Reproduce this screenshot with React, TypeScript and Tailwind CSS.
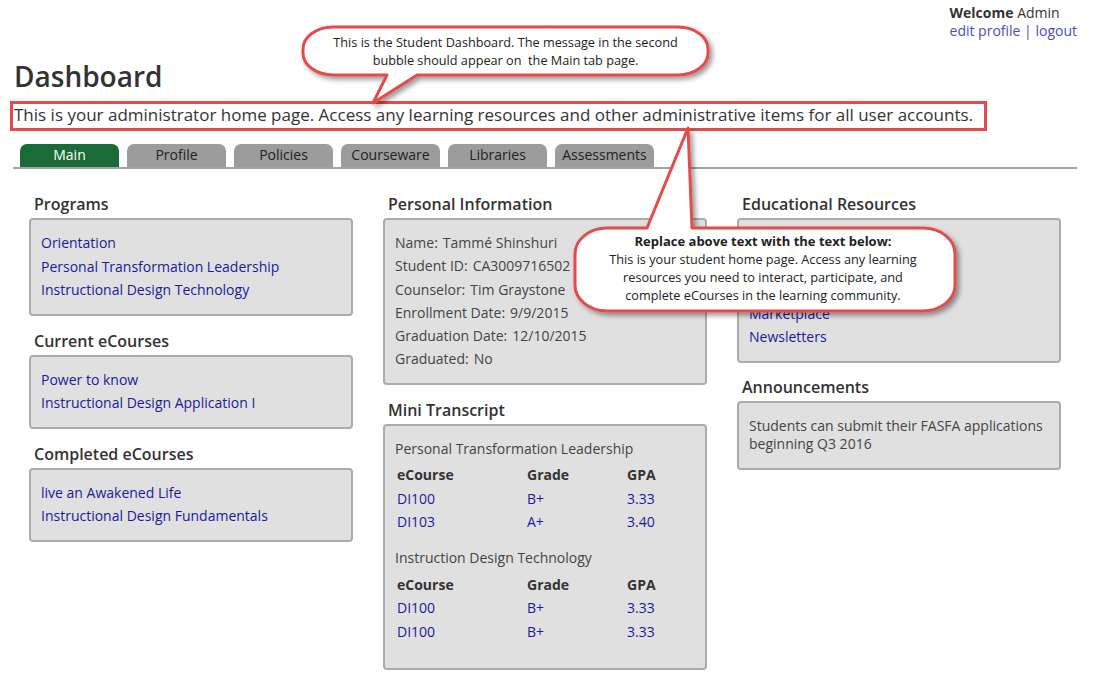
import React from "react";

const programs = ["Orientation", "Personal Transformation Leadership", "Instructional Design Technology"];
const current = ["Power to know", "Instructional Design Application I"];
const completed = ["live an Awakened Life", "Instructional Design Fundamentals"];
const resources = ["eLibrary", "Learning Community", "Student Forums", "Marketplace", "Newsletters"];

const personal: [string, string][] = [
    ["Name:", "Tammé Shinshuri"],
    ["Student ID:", "CA3009716502"],
    ["Counselor:", "Tim Graystone"],
    ["Enrollment Date:", "9/9/2015"],
    ["Graduation Date:", "12/10/2015"],
    ["Graduated:", "No"],
];

const transcript = [
    {
        program: "Personal Transformation Leadership",
        rows: [
            ["DI100", "B+", "3.33"],
            ["DI103", "A+", "3.40"],
        ],
    },
    {
        program: "Instruction Design Technology",
        rows: [
            ["DI100", "B+", "3.33"],
            ["DI100", "B+", "3.33"],
        ],
    },
];

const tabs = ["Main", "Profile", "Policies", "Courseware", "Libraries", "Assessments"];

function Section({ title, children }: { title: string; children: React.ReactNode }) {
    return (
        <div className="flex flex-col">
            <h2 className="mb-[3px] pl-[5px] text-[16px] leading-[22px] font-semibold text-[#333]">{title}</h2>
            <div className="rounded-[4px] border-2 border-[#acacac] bg-[#e0e0e0] pt-[11px] pr-[10px] pb-[12px] pl-[10px]">
                {children}
            </div>
        </div>
    );
}

function LinkList({ items }: { items: string[] }) {
    return (
        <ul className="flex flex-col">
            {items.map((item) => (
                <li key={item} className="text-[14px] leading-[23.5px] text-[#1a1a9c]">
                    {item}
                </li>
            ))}
        </ul>
    );
}

function Bubbles() {
    return (
        <>
            <svg className="pointer-events-none absolute top-0 left-0 h-[683px] w-[1093px]" viewBox="0 0 1093 683">
                <defs>
                    <filter id="sh" x="-10%" y="-20%" width="120%" height="150%">
                        <feDropShadow dx="3" dy="3" stdDeviation="2.5" floodColor="#000" floodOpacity="0.4" />
                    </filter>
                </defs>
                <path
                    d="M333,27 H678 A30,22 0 0 1 708,49 V53 A30,22 0 0 1 678,75 H417 L373,103 L387,75 H333 A30,22 0 0 1 303,53 V49 A30,22 0 0 1 333,27 Z"
                    fill="#fff"
                    stroke="#e54b4b"
                    strokeWidth="3"
                    strokeLinejoin="round"
                    filter="url(#sh)"
                />
                <path
                    d="M607,228 H647 L688,128 L692,228 H923 A32,26 0 0 1 955,254 V285 A32,26 0 0 1 923,311 H607 A32,26 0 0 1 575,285 V254 A32,26 0 0 1 607,228 Z"
                    fill="#fff"
                    stroke="#e54b4b"
                    strokeWidth="3"
                    strokeLinejoin="round"
                    filter="url(#sh)"
                />
            </svg>
            <div className="absolute top-[33px] left-[303px] w-[405px] text-center text-[12.7px] leading-[18px] whitespace-pre text-[#222]">
                {"This is the Student Dashboard. The message in the second\nbubble should appear on  the Main tab page."}
            </div>
            <div className="absolute top-[232px] left-[573px] w-[380px] text-center text-[12.7px] leading-[18px] text-[#222]">
                <div className="text-[13px] font-bold">Replace above text with the text below:</div>
                <div>This is your student home page. Access any learning</div>
                <div>resources you need to interact, participate, and</div>
                <div>complete eCourses in the learning community.</div>
            </div>
        </>
    );
}

export default function App() {
    return (
        <div className="relative min-h-[683px] w-full overflow-hidden bg-white font-['Open_Sans',sans-serif] text-[#333]">
            {/* top right user block */}
            <div className="flex justify-end pt-1 pr-[16px]">
                <div className="text-[14px] leading-[18px]">
                    <div>
                        <span className="font-bold">Welcome</span> Admin
                    </div>
                    <div className="text-[#4b4bc8]">edit profile | logout</div>
                </div>
            </div>

            <h1 className="mt-[19px] ml-[14px] text-[28px] leading-[34px] font-semibold text-[#333]">Dashboard</h1>

            <div className="mt-[8px] ml-[10px] h-[30px] w-[977px] border-3 border-[#e54b4b] pb-[2px] pl-[1px] text-[17px] leading-[22px] text-[#333]">
                This is your administrator home page. Access any learning resources and other administrative items for all user accounts.
            </div>

            {/* tabs */}
            <div className="mt-[13px] mr-[16px] ml-[13px] flex gap-[8px] border-b-2 border-[#a3a3a3] pl-[7px]">
                {tabs.map((t, i) => (
                    <div
                        key={t}
                        className={
                            i === 0
                                ? "h-[23px] w-[99px] rounded-t-[7px] bg-[#1b6b38] text-center text-[14px] leading-[22px] text-white"
                                : "h-[23px] w-[99px] rounded-t-[7px] bg-[#9c9c9c] text-center text-[14px] leading-[22px] text-[#222]"
                        }
                    >
                        {t}
                    </div>
                ))}
            </div>

            {/* columns */}
            <div className="flex gap-[30px] pt-[24px] pl-[29px]">
                <div className="flex w-[324px] flex-col gap-[14px]">
                    <Section title="Programs">
                        <LinkList items={programs} />
                    </Section>
                    <Section title="Current eCourses">
                        <LinkList items={current} />
                    </Section>
                    <Section title="Completed eCourses">
                        <LinkList items={completed} />
                    </Section>
                </div>

                <div className="flex w-[324px] flex-col gap-[14px]">
                    <Section title="Personal Information">
                        <ul className="flex flex-col">
                            {personal.map(([k, v]) => (
                                <li key={k} className="text-[14px] leading-[23.3px] text-[#444]">
                                    {k}
                                    <span className="ml-[5px]">{v}</span>
                                </li>
                            ))}
                        </ul>
                    </Section>
                    <Section title="Mini Transcript">
                        {transcript.map((g) => (
                            <div key={g.program} className="mb-[12.5px]">
                                <div className="text-[14px] leading-[23.5px] text-[#444]">{g.program}</div>
                                <div className="mt-[3px] grid grid-cols-[130px_100px_1fr] pl-[2px] text-[14px] leading-[23.5px]">
                                    <div className="font-bold text-[#333]">eCourse</div>
                                    <div className="font-bold text-[#333]">Grade</div>
                                    <div className="font-bold text-[#333]">GPA</div>
                                    {g.rows.map((r, j) => (
                                        <React.Fragment key={j}>
                                            <div className="text-[#1a1a9c]">{r[0]}</div>
                                            <div className="text-[#1a1a9c]">{r[1]}</div>
                                            <div className="text-[#1a1a9c]">{r[2]}</div>
                                        </React.Fragment>
                                    ))}
                                </div>
                            </div>
                        ))}
                    </Section>
                </div>

                <div className="flex w-[324px] flex-col gap-[13px]">
                    <Section title="Educational Resources">
                        <LinkList items={resources} />
                    </Section>
                    <Section title="Announcements">
                        <p className="pt-[3px] pb-[3px] text-[14px] leading-[18px] text-[#444]">
                            Students can submit their FASFA applications beginning Q3 2016
                        </p>
                    </Section>
                </div>
            </div>

            <Bubbles />
        </div>
    );
}
